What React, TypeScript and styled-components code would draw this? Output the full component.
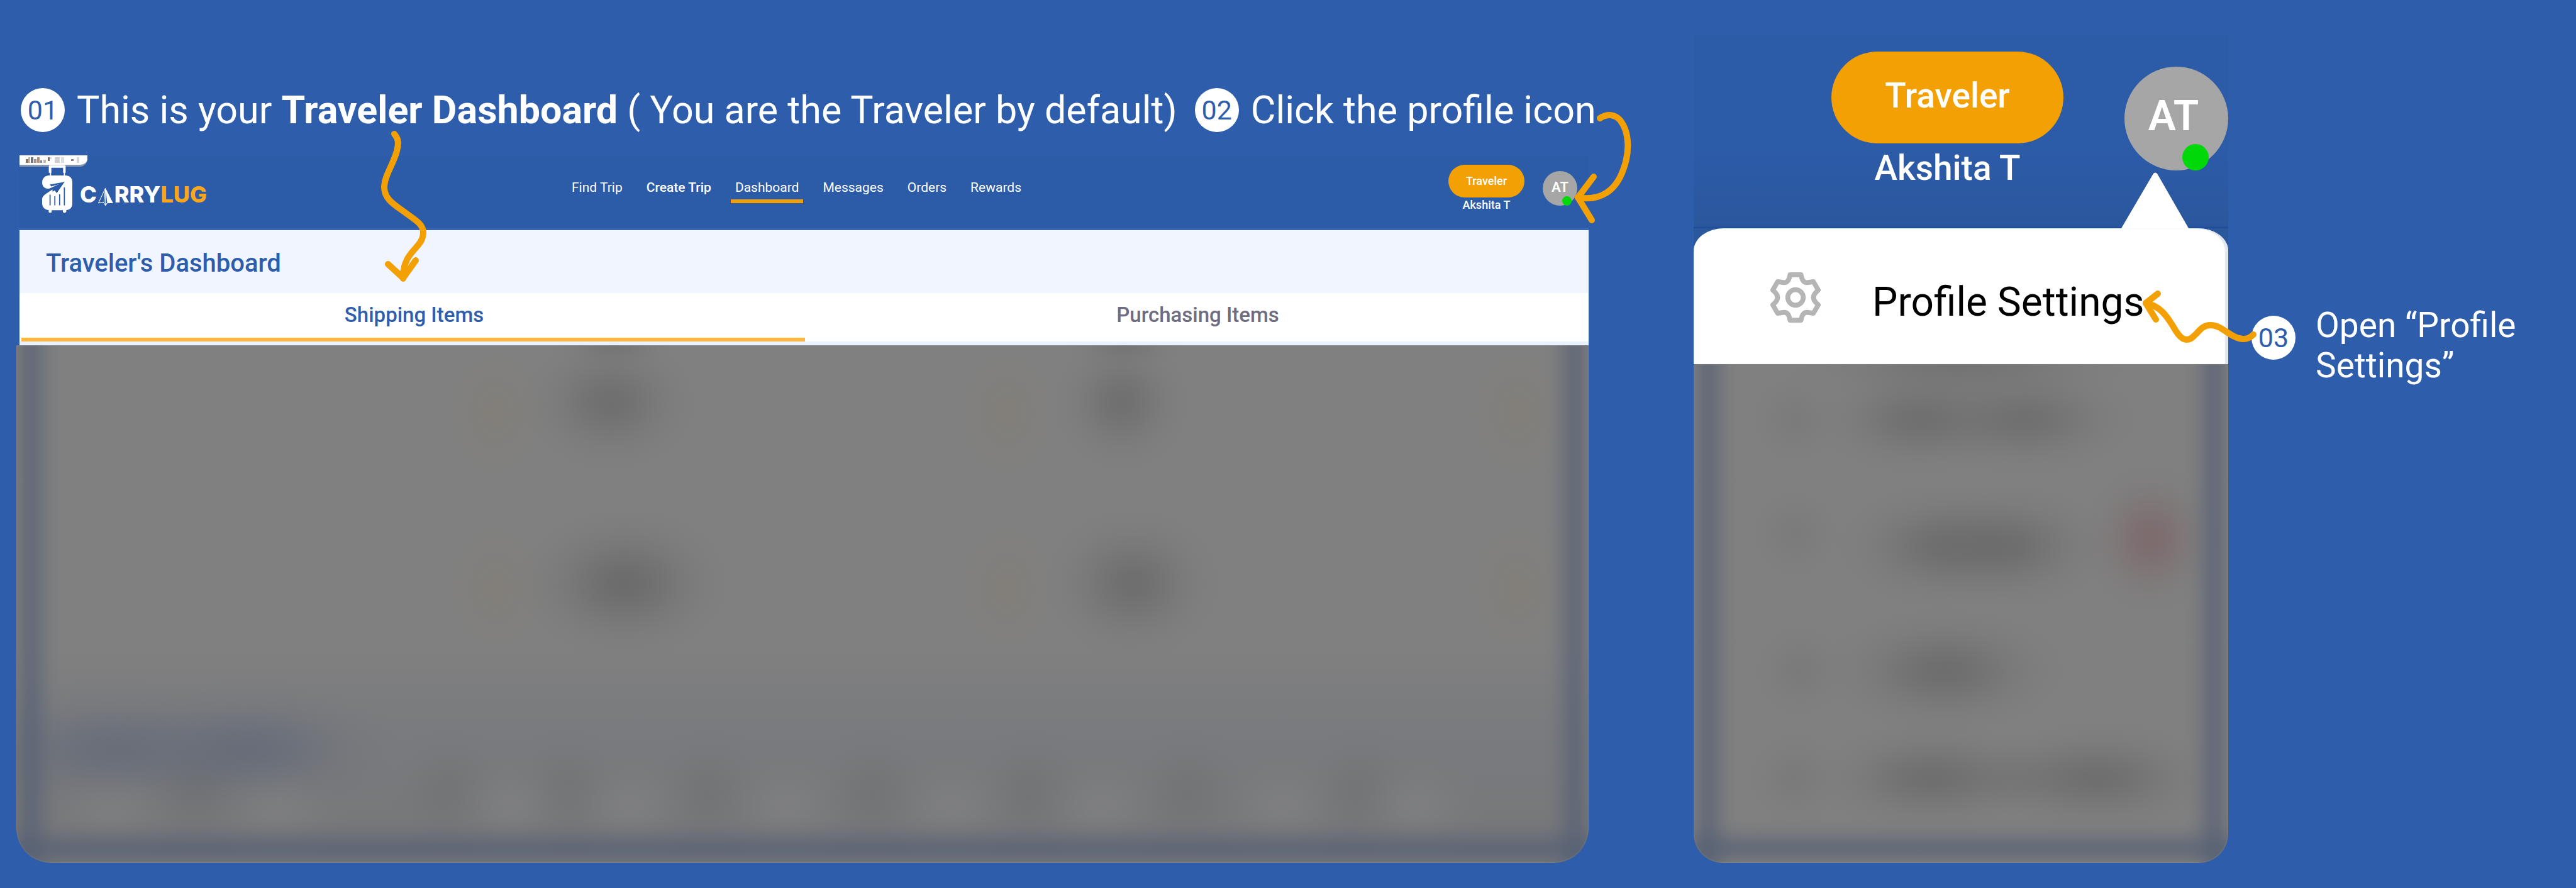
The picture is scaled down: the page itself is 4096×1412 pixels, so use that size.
import React from 'react';
import styled, { createGlobalStyle, css } from 'styled-components';

const BLUE = '#2e5eab';
const NAVY = '#2c5ba8';
const AMBER = '#f2a003';

const GlobalStyle = createGlobalStyle`
  *, *::before, *::after { box-sizing: border-box; }
  html { background: ${BLUE}; }
  body { margin: 0; min-height: 100vh; background: ${BLUE}; font-family: Roboto, "Liberation Sans", sans-serif; color: #fff; }
  a { color: inherit; text-decoration: none; }
  button { font: inherit; color: inherit; border: 0; padding: 0; cursor: pointer; }
`;

const Page = styled.main`
  display: flex;
  align-items: flex-start;
  padding-left: 26px;
  min-height: 100vh;
`;

const Tour = styled.section`
  position: relative;
  flex: 2500 1 0;
  min-width: 0;
  margin-right: 167px;
  padding-top: 139px;
`;

const Steps = styled.ol`
  list-style: none;
  display: flex;
  align-items: center;
  margin: 0;
  padding: 0 0 0 7px;
  gap: 28px;
  height: 72px;
  white-space: nowrap;
`;

const Step = styled.li`
  display: flex;
  align-items: center;
  gap: 19px;
  font-size: 61px;
  line-height: 72px;
`;

const Badge = styled.span`
  flex: none;
  display: grid;
  place-items: center;
  width: 70px;
  height: 70px;
  border-radius: 50%;
  background: #fff;
  color: ${BLUE};
  font-size: 43px;
  line-height: 50px;
`;

const Screen = styled.div`
  margin: 36px 0 0 5px;
`;

const Header = styled.header`
  position: relative;
  display: grid;
  grid-template-columns: 1fr auto 1fr;
  align-items: center;
  height: 119px;
  padding: 0 18px 0 36px;
  background: ${NAVY};
  border-bottom: 3px solid #3c66b0;
`;

const CutTag = styled.span`
  position: absolute;
  left: 0;
  top: 0;
  width: 108px;
  height: 18px;
  overflow: hidden;
  border-radius: 0 0 12px 0;
  background: #fff;
  border-bottom: 3px solid #8b97ad;
`;

const Brand = styled.a`
  position: relative;
  justify-self: start;
  display: flex;
  align-items: center;
  gap: 12px;
  padding-bottom: 10px;
`;

const Wordmark = styled.span`
  display: flex;
  align-items: baseline;
  margin-top: 18px;
  font: 800 36px/40px Inter, sans-serif;
`;

const Lug = styled.span`
  color: #f9a61c;
`;

const Nav = styled.nav`
  display: flex;
  gap: 24px;
  margin-right: 42px;
  padding-bottom: 2px;
`;

const NavLink = styled.a<{ $strong?: boolean; $active?: boolean }>`
  padding: 0 7px 6px;
  font-size: 21px;
  line-height: 26px;
  font-weight: ${(p) => (p.$strong ? 500 : 400)};
  border-bottom: 6px solid ${(p) => (p.$active ? AMBER : 'transparent')};
`;

const Account = styled.div<{ $large?: boolean }>`
  justify-self: end;
  display: flex;
  gap: ${(p) => (p.$large ? 97 : 29)}px;
  padding-bottom: 10px;
`;

const Identity = styled.div`
  display: flex;
  flex-direction: column;
  align-items: center;
`;

const Role = styled.button<{ $large?: boolean }>`
  background: ${AMBER};
  font-weight: 500;
  ${(p) =>
    p.$large
      ? css`width: 369px; height: 146px; padding-bottom: 6px; border-radius: 73px; font-size: 55px; line-height: 62px;`
      : css`width: 121px; height: 52px; border-radius: 26px; font-size: 18px; line-height: 20px;`}
`;

const UserName = styled.span<{ $large?: boolean }>`
  font-weight: 500;
  font-size: ${(p) => (p.$large ? 55 : 18)}px;
  line-height: ${(p) => (p.$large ? 78 : 24)}px;
`;

const Avatar = styled.button<{ $large?: boolean }>`
  position: relative;
  background: #a6a6a6;
  border-radius: 50%;
  font-weight: 600;
  ${(p) =>
    p.$large
      ? css`width: 165px; height: 165px; margin-top: 24px; padding: 0 9px 8px 0; font-size: 66px;`
      : css`width: 55px; height: 55px; margin-top: 10px; padding-bottom: 4px; font-size: 22px;`}
`;

const Online = styled.span<{ $large?: boolean }>`
  position: absolute;
  bottom: 0;
  right: ${(p) => (p.$large ? 31 : 9)}px;
  width: ${(p) => (p.$large ? 42 : 15)}px;
  height: ${(p) => (p.$large ? 42 : 15)}px;
  border-radius: 50%;
  background: #00d80a;
`;

const TitleBar = styled.div`
  display: flex;
  align-items: center;
  height: 100px;
  padding: 6px 0 0 42px;
  background: #f0f5ff;
`;

const Title = styled.h1`
  margin: 0;
  font-size: 40px;
  line-height: 48px;
  font-weight: 500;
  color: ${BLUE};
`;

const Tabs = styled.div`
  display: grid;
  grid-template-columns: 1fr 1fr;
  padding-left: 3px;
  background: #fff;
  border-bottom: 6px solid #ebf2ff;
`;

const Tab = styled.button<{ $active?: boolean }>`
  height: 77px;
  padding: 0 0 2px 3px;
  background: #fff;
  font-size: 33px;
  line-height: 40px;
  font-weight: 500;
  color: ${(p) => (p.$active ? BLUE : '#6d6c80')};
  border-bottom: 6px solid ${(p) => (p.$active ? '#ffb63b' : '#fff')};
`;

const haze = (x: number, y: number, rx: number, ry: number, rgb: string, a: number) => {
  const stops = [1, 0.94, 0.78, 0.58, 0.38, 0.22, 0.11, 0.04, 0];
  const list = stops.map((s, i) => `rgba(${rgb},${(a * s).toFixed(3)}) ${Math.round((i * 100) / 8)}%`);
  return `radial-gradient(${rx}px ${ry}px at ${x}% ${y}%, ${list.join(', ')})`;
};

const INK = '88,88,88';
const SAND = '140,122,96';
const DUSK = '86,96,116';
const MIST = '132,132,132';

const edge = (angle: number) =>
  `linear-gradient(${angle}deg, rgba(${DUSK},.2) 0, rgba(${DUSK},.6) 16px, rgba(${DUSK},.62) 28px, rgba(${DUSK},.3) 44px, rgba(${DUSK},.08) 58px, rgba(${DUSK},0) 72px)`;

const edges = [edge(90), edge(270), edge(0)];

const boardHaze = [
  ...edges,
  haze(37.8, 11, 145, 115, INK, 0.42),
  haze(70.3, 11, 115, 115, INK, 0.4),
  haze(38.7, 46, 175, 125, INK, 0.5),
  haze(71, 46, 145, 125, INK, 0.44),
  haze(38, 0, 100, 40, INK, 0.24),
  haze(70.5, 0, 100, 40, INK, 0.24),
  ...[30.5, 63, 95.5].flatMap((x) => [haze(x, 13, 95, 125, SAND, 0.18), haze(x, 47, 95, 125, SAND, 0.18)]),
  haze(6, 78, 260, 115, DUSK, 0.45),
  haze(15, 78, 240, 115, DUSK, 0.48),
  ...[6, 16.6, 31.5, 39, 49, 59.5, 69, 80.5, 89].map((x) => haze(x, 89, 120, 90, MIST, 0.5)),
  ...[11.5, 27.5, 35, 44, 54.5, 64.5, 74.5, 85.5].map((x) => haze(x, 86, 100, 110, INK, 0.14)),
  `linear-gradient(180deg, transparent 58%, rgba(108,112,122,.32) 74%, rgba(108,110,114,.5) 100%)`,
];

const menuHaze = [
  ...edges,
  haze(42, 11, 170, 95, INK, 0.4),
  haze(62, 11, 190, 95, INK, 0.4),
  haze(46, 36.5, 170, 105, INK, 0.4),
  haze(59, 36.5, 170, 105, INK, 0.42),
  haze(47, 61.5, 200, 105, INK, 0.45),
  haze(44, 83, 190, 95, INK, 0.42),
  haze(60, 83, 170, 80, INK, 0.16),
  haze(76, 83, 200, 95, INK, 0.42),
  haze(85.5, 35, 115, 125, '118,68,74', 0.33),
  haze(19, 11, 85, 85, INK, 0.12),
  haze(19, 34, 85, 85, INK, 0.12),
  haze(20, 61.5, 85, 85, INK, 0.14),
  haze(19, 83, 85, 85, INK, 0.14),
  haze(50, 0, 300, 70, INK, 0.3),
];

const BoardVeil = styled.div`
  height: 823px;
  border-radius: 0 0 55px 55px;
  background: ${boardHaze.join(', ')}, #808080;
  box-shadow: inset 0 0 3px #8a877c;
`;

const MenuVeil = styled.div`
  height: 793px;
  border-radius: 0 0 46px 46px;
  background: ${menuHaze.join(', ')}, #808080;
  box-shadow: inset 0 0 3px #8a877c;
`;

const Arrow = styled.svg`
  position: absolute;
  overflow: visible;
  fill: none;
  stroke: ${AMBER};
  stroke-width: 10;
  stroke-linecap: round;
  stroke-linejoin: round;
  pointer-events: none;
`;

const ShippingArrow = styled(Arrow)`
  left: 584px;
  top: 207px;
`;

const ProfileArrow = styled(Arrow)`
  right: -70px;
  top: 178px;
`;

const SettingsArrow = styled(Arrow)`
  right: -42px;
  top: 458px;
`;

const Callout = styled.section`
  position: relative;
  flex: 850 1 0;
  min-width: 0;
  padding-top: 55px;
`;

const CalloutTop = styled.div`
  position: relative;
  display: flex;
  justify-content: flex-end;
  height: 308px;
  padding-top: 27px;
  background: linear-gradient(180deg, ${NAVY} 180px, #2b579d 304px, #1c4a98 308px);
`;

const Notch = styled.svg`
  position: absolute;
  right: 63px;
  bottom: 0;
  fill: #fff;
`;

const MenuShell = styled.div`
  background: #2b579d;
`;

const MenuItem = styled.a`
  display: flex;
  align-items: center;
  gap: 82px;
  height: 216px;
  padding: 3px 0 0 122px;
  border-radius: 48px 48px 0 0 / 36px 36px 0 0;
  background: #fff;
  box-shadow: inset -5px 0 2px #dfe6ee;
  color: #000;
  font-size: 64px;
  line-height: 74px;
  white-space: nowrap;
`;

const MenuLabel = styled.span`
  padding-top: 16px;
`;

const Note = styled.aside`
  flex: 516 1 0;
  min-width: 0;
  display: flex;
  gap: 32px;
  margin-left: 37px;
  padding-top: 485px;
  font-size: 55px;
  line-height: 64px;
`;

const NoteBadge = styled(Badge)`
  margin-top: 17px;
`;

const Suitcase = () => (
  <svg width="48" height="77" viewBox="0 0 190 300" aria-hidden="true">
    <g fill="none" stroke="#fff" strokeLinejoin="round">
      <path d="M50 48V8H140V48" strokeWidth="16" />
      <path d="M53 45V70M140 45V70" strokeWidth="7" />
    </g>
    <path
      fill="#fff"
      d="M38 65H150Q190 70 190 105V245Q188 280 152 283V293Q148 300 140 300Q132 300 131 293V284H60V293Q58 300 50 300Q42 300 41 293V283Q4 280 0 245V212Q2 195 25 180L66 152V168L78 158L92 176L140 105L118 114L44 148Q0 148 0 108Q2 70 38 65Z"
    />
    <path fill={NAVY} d="M48 122L141 105L92 174L80 158L66 166V152L40 160L125 114L58 134Z" />
    <path stroke={NAVY} strokeWidth="7" strokeLinecap="round" d="M50 188V250M80 198V250M110 186V250M140 143V250" />
  </svg>
);

const PlaneIcon = styled.svg`
  align-self: flex-end;
  margin: 0 2px 1px 2px;
`;

const PlaneA = () => (
  <PlaneIcon width="24" height="30" viewBox="0 0 95 116" role="img" aria-label="A">
    <path fill="none" stroke="#fff" strokeWidth="4" d="M46 3L3 96L36 94L46 112L58 96" />
    <path fill="#fff" d="M46 2L94 98H58L46 12Z" />
    <path fill="none" stroke="#fff" strokeWidth="4" d="M46 3L36 94M46 10V112" />
  </PlaneIcon>
);

const TAG_MARKS = [
  [10, 3, 4, 6, '#8a7361'], [14, 0, 3, 9, '#c9b49b'], [18, 0, 4, 9, '#6d7383'], [23, 3, 4, 6, '#a9927c'],
  [28, 0, 4, 9, '#b58f78'], [33, 5, 3, 4, '#7e8796'], [38, 4, 4, 5, '#c7b9a8'], [45, 0, 3, 6, '#7f6f6a'],
  [48, 0, 3, 3, '#c8dcec'], [56, 0, 8, 9, '#cfcdd2'], [66, 0, 5, 9, '#dfdce0'], [82, 3, 4, 3, '#8e8076'],
  [91, 0, 4, 9, '#d8d6d3'],
] as const;

const TagMarks = () => (
  <svg width="108" height="12" viewBox="0 0 108 12" aria-hidden="true">
    {TAG_MARKS.map(([x, y, w, h, c]) => (
      <rect key={x} x={x} y={y} width={w} height={h} fill={c} />
    ))}
  </svg>
);

const Gear = () => (
  <svg width="80" height="80" viewBox="36 84 312 312" fill="none" stroke="#b5b5b5" strokeWidth="30" strokeLinejoin="round" aria-hidden="true">
    <path d="M158 99H226C231 130 240 148 262 148L303 142L333 194L316 211Q291 240 316 269L333 286L303 338L262 332C240 332 231 350 226 381H158C153 350 144 332 122 332L81 338L51 286L68 269Q93 240 68 211L51 194L81 142L122 148C144 148 153 130 158 99Z" />
    <circle cx="192" cy="240" r="48" />
  </svg>
);

const AccountBlock = ({ large }: { large?: boolean }) => (
  <Account $large={large}>
    <Identity>
      <Role $large={large}>Traveler</Role>
      <UserName $large={large}>Akshita T</UserName>
    </Identity>
    <Avatar $large={large}>
      AT
      <Online $large={large} />
    </Avatar>
  </Account>
);

const links = ['Find Trip', 'Create Trip', 'Dashboard', 'Messages', 'Orders', 'Rewards'];

export default function App() {
  return (
    <>
      <GlobalStyle />
      <Page>
        <Tour>
          <Steps>
            <Step>
              <Badge>01</Badge>
              <span>
                This is your <b>Traveler Dashboard</b> ( You are the Traveler by default)
              </span>
            </Step>
            <Step>
              <Badge>02</Badge>
              <span>Click the profile icon</span>
            </Step>
          </Steps>
          <Screen>
            <Header>
              <CutTag>
                <TagMarks />
              </CutTag>
              <Brand href="#">
                <Suitcase />
                <Wordmark>
                  C<PlaneA />RRY<Lug>LUG</Lug>
                </Wordmark>
              </Brand>
              <Nav>
                {links.map((l) => (
                  <NavLink key={l} href="#" $strong={l === 'Create Trip'} $active={l === 'Dashboard'}>
                    {l}
                  </NavLink>
                ))}
              </Nav>
              <AccountBlock />
            </Header>
            <TitleBar>
              <Title>Traveler's Dashboard</Title>
            </TitleBar>
            <Tabs role="tablist">
              <Tab role="tab" aria-selected $active>Shipping Items</Tab>
              <Tab role="tab" aria-selected={false}>Purchasing Items</Tab>
            </Tabs>
          </Screen>
          <BoardVeil />
          <ShippingArrow width="70" height="245" viewBox="610 207 70 245" aria-hidden="true">
            <path d="M627 213C634 221 634 228 631 240C626 260 611 280 611 298C611 318 630 327 647 340C664 352 673 358 673 370C673 388 656 395 647 413C641 425 641 435 641 443" />
            <path d="M617 420L641 442L661 414" />
          </ShippingArrow>
          <ProfileArrow width="90" height="180" viewBox="2506 178 90 180" aria-hidden="true">
            <path d="M2544 188C2556 180 2568 182 2576 191C2592 211 2591 244 2581 270C2569 304 2544 320 2509 314" />
            <path d="M2534 281L2509 314L2531 350" />
          </ProfileArrow>
        </Tour>

        <Callout>
          <CalloutTop>
            <AccountBlock large />
            <Notch width="107" height="90" viewBox="0 0 107 90" aria-hidden="true">
              <path d="M0 90L51 3Q54 0 57 3L107 90Z" />
            </Notch>
          </CalloutTop>
          <MenuShell>
            <MenuItem href="#">
              <Gear />
              <MenuLabel>Profile Settings</MenuLabel>
            </MenuItem>
          </MenuShell>
          <MenuVeil />
          <SettingsArrow width="180" height="90" viewBox="3406 458 180 90" aria-hidden="true">
            <path d="M3413 482C3434 486 3445 500 3457 520C3466 536 3474 544 3485 538C3497 530 3500 517 3516 517C3535 517 3547 538 3568 539C3576 539 3580 536 3584 532" />
            <path d="M3432 467L3413 482L3429 508" />
          </SettingsArrow>
        </Callout>

        <Note>
          <NoteBadge>03</NoteBadge>
          <span>Open “Profile Settings”</span>
        </Note>
      </Page>
    </>
  );
}
